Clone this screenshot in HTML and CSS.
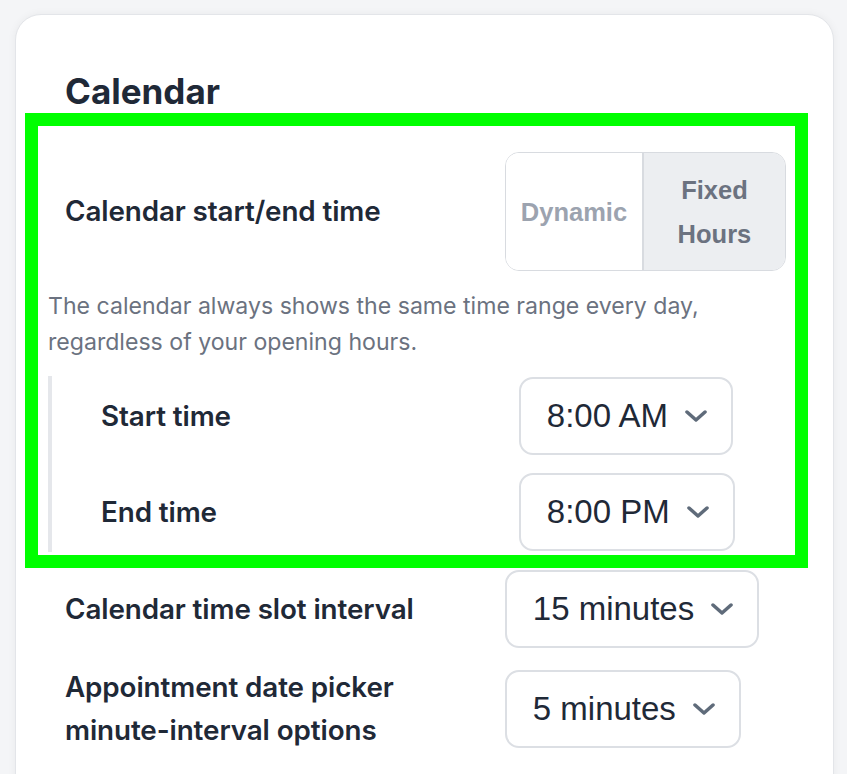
FILE: index.html
```html
<!DOCTYPE html>
<html lang="en">
<head>
    <meta charset="UTF-8">
    <meta name="viewport" content="width=device-width, initial-scale=1.0">
    <title>Calendar settings</title>
    <link rel="stylesheet" href="styles.css">
</head>
<body>
    <div class="page">
        <section class="card">
            <h2 class="card-title">Calendar</h2>

            <div class="setting-row">
                <div class="setting-label">Calendar start/end time</div>
                <div class="segmented">
                    <button type="button" class="seg-btn">Dynamic</button>
                    <button type="button" class="seg-btn active">Fixed Hours</button>
                </div>
            </div>

            <p class="setting-help">The calendar always shows the same time range every day, regardless of your opening hours.</p>

            <!-- fixed hours -->
            <div class="sub-settings">
                <div class="setting-row">
                    <div class="setting-label">Start time</div>
                    <div class="select-box">
                        <span>8:00 AM</span>
                        <svg class="chevron" viewBox="0 0 22 12"><path d="M2 2l9 8 9-8"/></svg>
                    </div>
                </div>
                <div class="setting-row">
                    <div class="setting-label">End time</div>
                    <div class="select-box">
                        <span>8:00 PM</span>
                        <svg class="chevron" viewBox="0 0 22 12"><path d="M2 2l9 8 9-8"/></svg>
                    </div>
                </div>
            </div>

            <div class="setting-row">
                <div class="setting-label">Calendar time slot interval</div>
                <div class="select-box">
                    <span>15 minutes</span>
                    <svg class="chevron" viewBox="0 0 22 12"><path d="M2 2l9 8 9-8"/></svg>
                </div>
            </div>

            <div class="setting-row">
                <div class="setting-label">Appointment date picker minute-interval options</div>
                <div class="select-box">
                    <span>5 minutes</span>
                    <svg class="chevron" viewBox="0 0 22 12"><path d="M2 2l9 8 9-8"/></svg>
                </div>
            </div>
        </section>

        <div class="highlight"></div>
    </div>
</body>
</html>
```

FILE: styles.css
```css
* {
    margin: 0;
    padding: 0;
    box-sizing: border-box;
}

html, body {
    height: 100%;
    overflow: hidden;
}

body {
    font-family: 'Inter', 'Noto Sans', sans-serif;
    background-color: #f4f5f7;
    color: #1f2937;
}

.page {
    position: relative;
    padding: 14px 13px 0 15px;
}

/* card */
.card {
    background: #fff;
    border: 1px solid #e3e5e9;
    border-radius: 26px;
    box-shadow: 0 0 8px rgba(0,0,0,0.05);
    padding: 55px 47px 60px 49px;
    display: flex;
    flex-direction: column;
}

.card-title {
    font-size: 35px;
    font-weight: 700;
    line-height: 42px;
    margin-bottom: 40px;
}

.setting-row {
    display: grid;
    grid-template-columns: 61fr 39fr;
    align-items: center;
}

.setting-label {
    font-size: 27.8px;
    font-weight: 600;
    line-height: 43px;
    letter-spacing: -0.1px;
    padding-right: 40px;
}

/* segmented control */
.segmented {
    display: flex;
    width: 281px;
    height: 119px;
    border: 1px solid #d8dbe0;
    border-radius: 14px;
    overflow: hidden;
}

.seg-btn {
    font-family: 'Liberation Sans', Arial, sans-serif;
    font-size: 25.5px;
    font-weight: 700;
    line-height: 44px;
    color: #9ca3af;
    background: #fff;
    border: none;
    padding: 0 15px;
    flex: none;
}

.seg-btn.active {
    flex: 1;
    background: #eceef1;
    color: #6b7280;
    border-left: 2px solid #d8dbe0;
}

.setting-help {
    font-size: 23.1px;
    line-height: 36px;
    color: #6b7280;
    margin: 17px 0 16px -17px;
}

.sub-settings {
    margin-left: -17px;
    border-left: 4px solid #e5e7eb;
    padding: 1px 0 1px 49px;
    display: flex;
    flex-direction: column;
    gap: 18px;
    margin-bottom: 18px;
}

.sub-settings + .setting-row {
    margin-bottom: 18px;
}

/* select look-alike */
.select-box {
    justify-self: start;
    display: flex;
    align-items: center;
    gap: 17px;
    height: 78px;
    padding: 0 24px 0 26px;
    border: 2px solid #dcdfe4;
    border-radius: 14px;
    font-family: 'Liberation Sans', Arial, sans-serif;
    font-size: 33px;
    color: #1f2937;
}

.chevron {
    width: 22px;
    height: 12px;
    fill: none;
    stroke: #5f6b7a;
    stroke-width: 3.5;
    stroke-linecap: round;
    stroke-linejoin: round;
}

/* highlight frame drawn over the section */
.highlight {
    position: absolute;
    left: 25px;
    top: 113px;
    width: 783px;
    height: 455px;
    border: 13px solid #00ff00;
    pointer-events: none;
}
```
